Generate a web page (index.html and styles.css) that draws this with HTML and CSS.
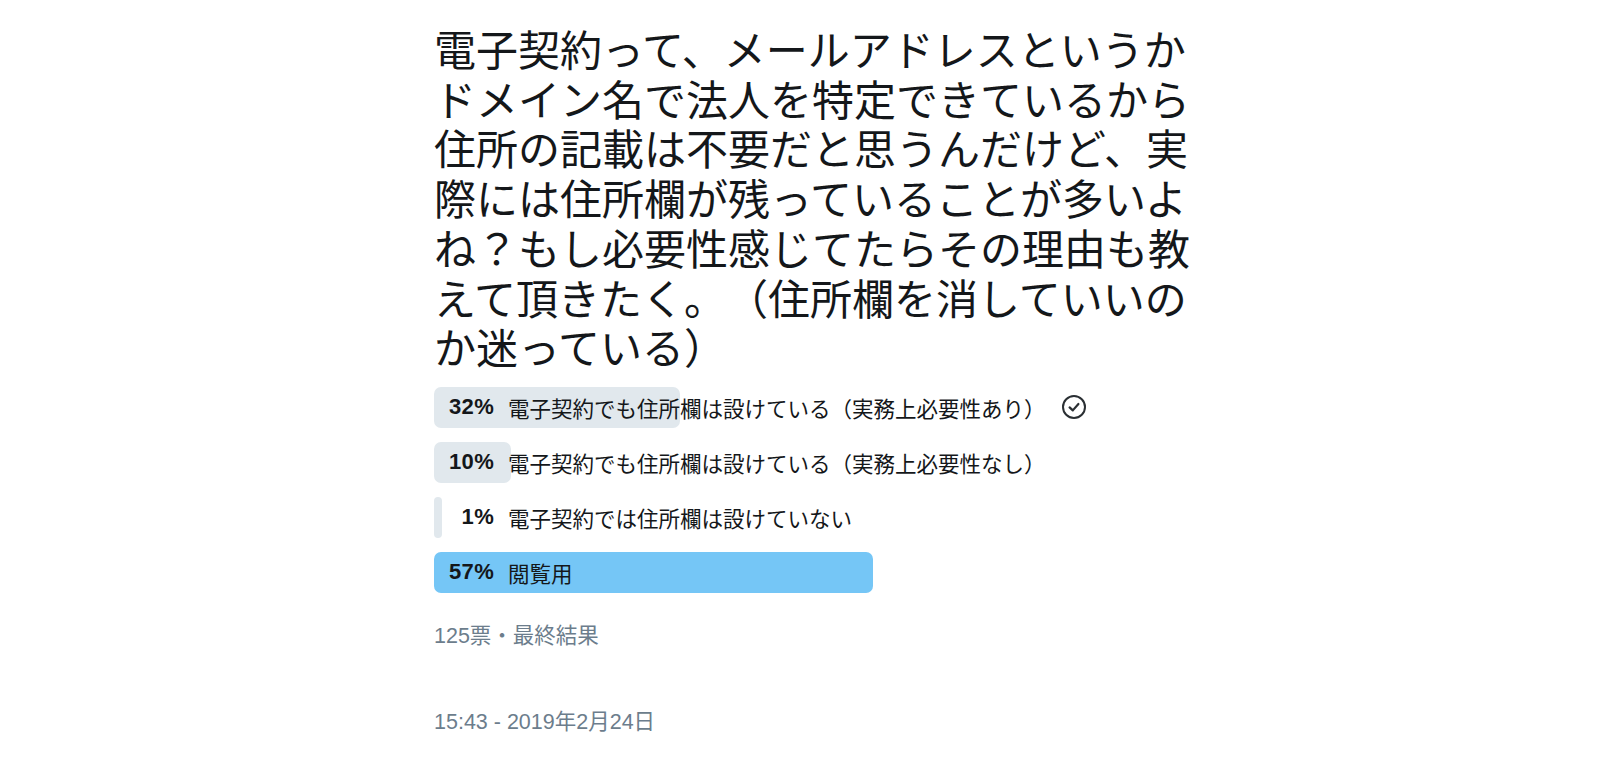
FILE: index.html
```html
<!DOCTYPE html>
<html lang="ja">
<head>
    <meta charset="UTF-8">
    <meta name="viewport" content="width=device-width, initial-scale=1.0">
    <title>ツイート</title>
    <link rel="stylesheet" href="styles.css">
</head>
<body>
    <div class="tweet">
        <p class="tweet-text">電子契約って、メールアドレスというかドメイン名で法人を特定できているから住所の記載は不要だと思うんだけど、実際には住所欄が残っていることが多いよね？もし必要性感じてたらその理由も教えて頂きたく。（住所欄を消していいのか迷っている）</p>

        <div class="poll">
            <div class="poll-row">
                <div class="poll-bar" style="width: 32%"></div>
                <span class="poll-pct">32%</span>
                <span class="poll-label">電子契約でも住所欄は設けている（実務上必要性あり）</span>
                <!-- voted choice -->
                <svg class="poll-check" width="26" height="26" viewBox="0 0 26 26">
                    <circle cx="13" cy="13" r="11" fill="none" stroke="#2a2f33" stroke-width="2"/>
                    <path d="M8.6 13.4 L11.8 16.4 L17.4 10" fill="none" stroke="#2a2f33" stroke-width="2.2" stroke-linecap="round" stroke-linejoin="round"/>
                </svg>
            </div>
            <div class="poll-row">
                <div class="poll-bar" style="width: 10%"></div>
                <span class="poll-pct">10%</span>
                <span class="poll-label">電子契約でも住所欄は設けている（実務上必要性なし）</span>
            </div>
            <div class="poll-row">
                <div class="poll-bar" style="width: 1%"></div>
                <span class="poll-pct">1%</span>
                <span class="poll-label">電子契約では住所欄は設けていない</span>
            </div>
            <div class="poll-row">
                <div class="poll-bar winner" style="width: 57%"></div>
                <span class="poll-pct">57%</span>
                <span class="poll-label">閲覧用</span>
            </div>
        </div>

        <div class="poll-meta">125票・最終結果</div>
        <div class="tweet-time">15:43 - 2019年2月24日</div>
    </div>
</body>
</html>
```

FILE: styles.css
```css
body {
    margin: 0;
    padding: 0;
    background-color: white;
    color: #14171a;
    font-family: "Liberation Sans", "Noto Sans CJK JP", sans-serif;
    text-spacing-trim: space-all;
}
.tweet {
    width: 770px;
    margin-left: 434px;
    padding-top: 23px;
}
.tweet-text {
    margin: 0;
    font-size: 42px;
    line-height: 49.7px;
    font-family: "Noto Sans CJK JP", sans-serif;
}

.poll {
    margin-top: 16px;
    display: flex;
    flex-direction: column;
    gap: 14px;
}
.poll-row {
    position: relative;
    height: 41px;
    display: flex;
    align-items: center;
    font-size: 21.5px;
}
.poll-bar {
    position: absolute;
    left: 0;
    top: 0;
    bottom: 0;
    min-width: 7px;
    background-color: #e1e8ed;
    border-radius: 7px;
}
.poll-bar.winner {
    background-color: #75c6f6;
}
.poll-pct {
    position: relative;
    width: 60px;
    text-align: right;
    font-size: 22px;
    font-weight: bold;
    letter-spacing: 0.3px;
}
.poll-label {
    position: relative;
    margin-left: 14px;
}
.poll-check {
    position: relative;
    margin-left: 15px;
}

.poll-meta {
    margin-top: 31px;
    font-size: 21.5px;
    line-height: 25px;
    color: #6c7d8c;
}
.tweet-time {
    margin-top: 61px;
    font-size: 21.5px;
    line-height: 25px;
    color: #6c7d8c;
}
```
